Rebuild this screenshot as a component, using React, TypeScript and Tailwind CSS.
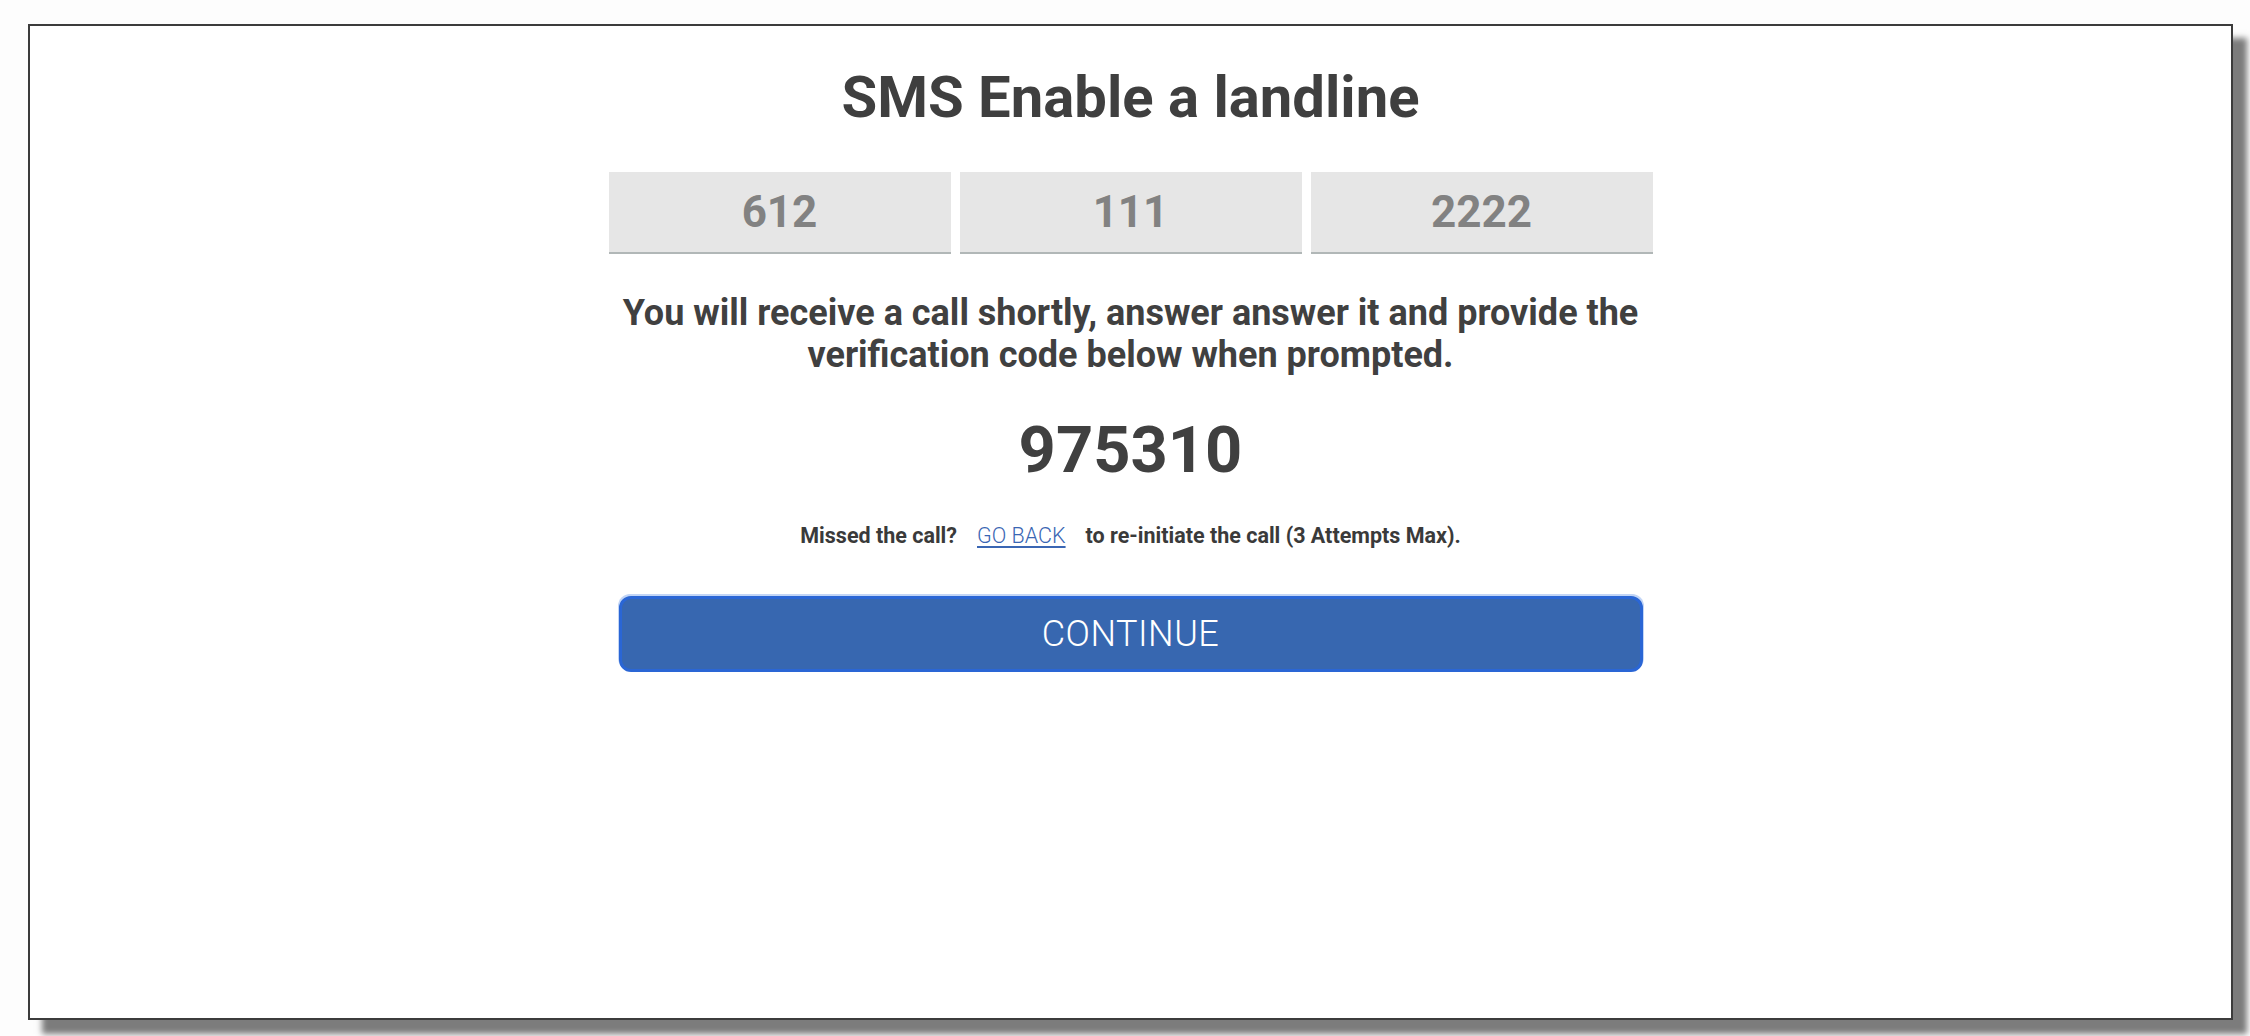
import { useState } from "react";

const phoneParts = ["612", "111", "2222"];

const App = () => {
  const [code] = useState("975310");

  return (
    <div className="min-h-screen bg-[#fdfdfd] pt-[24px] pl-[28px] pr-[17px] font-['Roboto',sans-serif] overflow-hidden">
      <div className="h-[996px] border-2 border-[#3c3c3c] bg-white shadow-[14px_14px_6px_#7c7c7c] flex flex-col items-center">
        <h1 className="mt-[42px] text-[58px] leading-[58px] font-bold text-[#3f3f3f]">
          SMS Enable a landline
        </h1>

        <div className="mt-[46px] flex gap-[9px]">
          {phoneParts.map((part) => (
            <div
              key={part}
              className="w-[342px] h-[82px] bg-[#e6e6e6] border-b-2 border-[#b1b7b7] flex items-center justify-center text-[44px] font-bold text-[#828282]"
            >
              {part}
            </div>
          ))}
        </div>

        <p className="mt-[38px] text-center text-[36px] leading-[42px] font-bold text-[#404040] whitespace-nowrap">
          You will receive a call shortly, answer answer it and provide the
          <br />
          verification code below when prompted.
        </p>

        <div className="mt-[40px] text-[65px] leading-[68px] font-bold text-[#404040]">
          {code}
        </div>

        <div className="mt-[39px] flex items-center text-[21.5px] leading-[26px] text-[#3a3a3a] whitespace-nowrap">
          <span className="font-bold">Missed the call?</span>
          <a
            href="#"
            className="mx-[20px] font-light text-[#3a66b3] underline decoration-[2px] underline-offset-[3px]"
          >
            GO BACK
          </a>
          <span className="font-bold">to re-initiate the call (3 Attempts Max).</span>
        </div>

        <button className="mt-[47px] w-[1024px] h-[76px] rounded-[12px] bg-[#3767b0] border-[3px] border-[#2a66d5] shadow-[-1px_-2px_0_#c2d5f6,1px_-2px_0_#c2d5f6] text-white text-[36px] font-light tracking-[0.5px]">
          CONTINUE
        </button>
      </div>
    </div>
  );
};

export default App;
